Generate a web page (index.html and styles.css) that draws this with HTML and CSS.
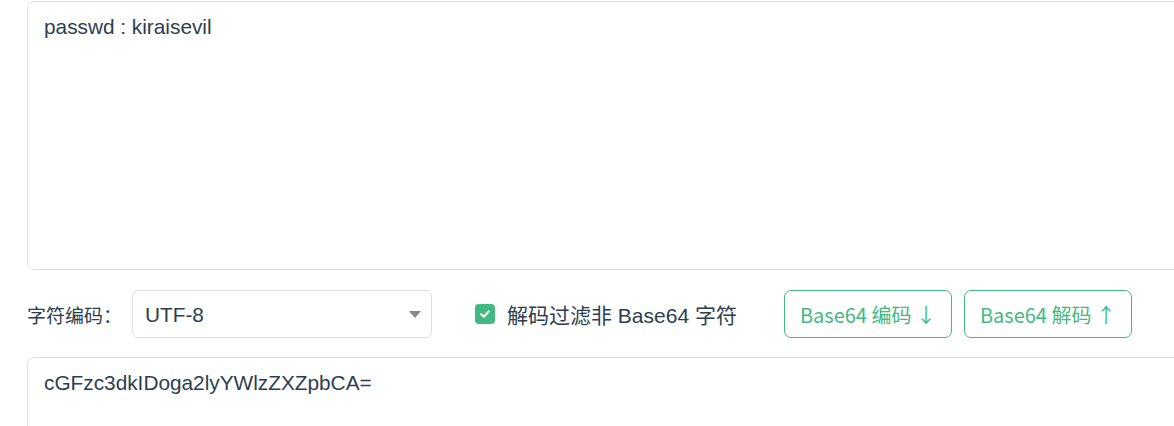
FILE: index.html
```html
<!DOCTYPE html>
<html lang="zh-CN">
<head>
    <meta charset="UTF-8">
    <meta name="viewport" content="width=device-width, initial-scale=1.0">
    <title>Base64 编码解码</title>
    <link rel="stylesheet" href="styles.css">
</head>
<body>

    <div class="page">
        <textarea class="box box-top" spellcheck="false">passwd : kiraisevil</textarea>

        <div class="toolbar">
            <label class="enc-label" for="charset">字符编码：</label>
            <div class="select-wrap">
                <select id="charset" class="select">
                    <option>UTF-8</option>
                    <option>GBK</option>
                    <option>GB2312</option>
                </select>
                <span class="select-arrow"></span>
            </div>

            <label class="check">
                <span class="check-box">
                    <svg width="12" height="12" viewBox="0 0 12 12">
                        <path d="M2.2 6.2 L4.9 8.7 L9.8 3.4" fill="none" stroke="#fff" stroke-width="2" stroke-linecap="round" stroke-linejoin="round"/>
                    </svg>
                </span>
                解码过滤非 Base64 字符
            </label>

            <div class="actions">
                <button class="btn">Base64 编码 ↓</button>
                <button class="btn">Base64 解码 ↑</button>
            </div>
        </div>

        <textarea class="box box-bottom" spellcheck="false">cGFzc3dkIDoga2lyYWlzZXZpbCA=</textarea>
    </div>

</body>
</html>
```

FILE: styles.css
```css
/* page layout */
body {
    margin: 0;
    overflow: hidden;
    background-color: #fff;
    font-family: "Liberation Sans", Arial, "Noto Sans CJK SC", sans-serif;
    color: #2c3e50;
}

.page {
    padding: 1px 0 0 27px;
}

.box {
    display: block;
    box-sizing: border-box;
    width: 1180px;
    border: 1px solid #dcdfe6;
    border-radius: 7px;
    padding: 11px 16px;
    font-family: "Liberation Sans", Arial, sans-serif;
    font-size: 20.8px;
    line-height: 1.3;
    color: #2c3e50;
    resize: none;
    outline: none;
    background: #fff;
}

.box-top {
    height: 269px;
}

.box-bottom {
    height: 80px;
}

/* toolbar row */
.toolbar {
    display: flex;
    align-items: center;
    height: 48px;
    margin: 20px 0 19px;
}

.enc-label {
    font-family: "Noto Sans CJK SC", sans-serif;
    font-size: 19px;
    color: #2c3e50;
    margin-right: 10px;
}

.select-wrap {
    position: relative;
    width: 300px;
    height: 48px;
}

.select {
    -webkit-appearance: none;
    appearance: none;
    box-sizing: border-box;
    width: 100%;
    height: 100%;
    border: 1px solid #dcdfe6;
    border-radius: 6px;
    padding: 0 12px;
    background: #fff;
    font-family: "Liberation Sans", Arial, sans-serif;
    font-size: 20.8px;
    color: #2c3e50;
    outline: none;
}

.select-arrow {
    position: absolute;
    right: 11px;
    top: 21px;
    width: 0;
    height: 0;
    border-left: 6px solid transparent;
    border-right: 6px solid transparent;
    border-top: 7px solid #888;
    pointer-events: none;
}

.check {
    display: flex;
    align-items: center;
    margin-left: 43px;
    font-family: "Liberation Sans", Arial, "Noto Sans CJK SC", sans-serif;
    font-size: 21px;
    color: #2c3e50;
    cursor: pointer;
}

.check-box {
    display: flex;
    align-items: center;
    justify-content: center;
    width: 20px;
    height: 20px;
    margin-right: 12px;
    border-radius: 4px;
    background-color: #42b983;
}

.actions {
    display: flex;
    gap: 12px;
    margin-left: 47px;
}

.btn {
    box-sizing: border-box;
    height: 48px;
    padding: 0 15px;
    border: 1px solid #42b983;
    border-radius: 7px;
    background: #fff;
    color: #42b983;
    font-family: "Noto Sans CJK SC", sans-serif;
    font-size: 20px;
    cursor: pointer;
}

.btn:hover {
    background-color: #42b983;
    color: #fff;
}
```
